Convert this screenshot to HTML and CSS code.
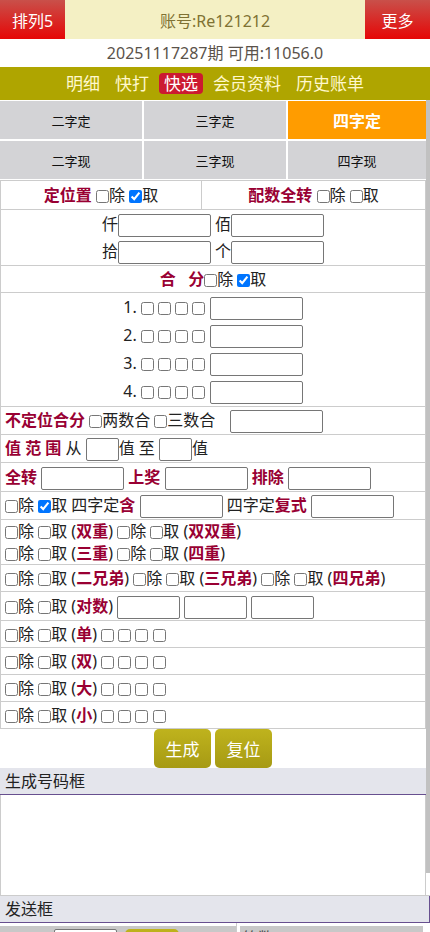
FILE: index.html
```html
<!DOCTYPE html>
<html lang="zh-CN">
<head>
    <meta charset="UTF-8">
    <meta name="viewport" content="width=device-width, initial-scale=1.0">
    <title>快选</title>
    <link rel="stylesheet" href="styles.css">
</head>
<body>
    <div class="top-bar">
        <a class="top-btn">排列5</a>
        <div class="account">账号:Re121212</div>
        <a class="top-btn">更多</a>
    </div>
    <div class="issue">20251117287期 可用:11056.0</div>
    <div class="nav">
        <a>明细</a>
        <a>快打</a>
        <a class="active">快选</a>
        <a>会员资料</a>
        <a>历史账单</a>
    </div>

    <div class="main">
        <div class="tabs">
            <a>二字定</a>
            <a>三字定</a>
            <a class="active">四字定</a>
            <a>二字现</a>
            <a>三字现</a>
            <a>四字现</a>
        </div>

        <div class="form">
            <div class="row split h28">
                <div class="cell"><b class="lbl">定位置</b> <input type="checkbox">除 <input type="checkbox" checked>取</div>
                <div class="cell"><b class="lbl">配数全转</b> <input type="checkbox">除 <input type="checkbox">取</div>
            </div>
            <div class="row multi pos">
                <div class="line">仟<input class="txt"> 佰<input class="txt"></div>
                <div class="line">拾<input class="txt"> 个<input class="txt"></div>
            </div>
            <div class="row center h26">
                <b class="lbl">合&nbsp;&nbsp;&nbsp;分</b><input type="checkbox">除 <input type="checkbox" checked>取
            </div>
            <div class="row multi sums">
                <div class="line">1. <input type="checkbox"> <input type="checkbox"> <input type="checkbox"> <input type="checkbox"> <input class="txt"></div>
                <div class="line">2. <input type="checkbox"> <input type="checkbox"> <input type="checkbox"> <input type="checkbox"> <input class="txt"></div>
                <div class="line">3. <input type="checkbox"> <input type="checkbox"> <input type="checkbox"> <input type="checkbox"> <input class="txt"></div>
                <div class="line">4. <input type="checkbox"> <input type="checkbox"> <input type="checkbox"> <input type="checkbox"> <input class="txt"></div>
            </div>
            <div class="row">
                <b class="lbl">不定位合分</b> <input type="checkbox">两数合 <input type="checkbox">三数合 <input class="txt ml">
            </div>
            <div class="row">
                <b class="lbl">值 范 围</b> 从 <input class="txt xs">值 至 <input class="txt xs">值
            </div>
            <div class="row h28">
                <b class="lbl">全转</b> <input class="txt md"> <b class="lbl">上奖</b> <input class="txt md"> <b class="lbl">排除</b> <input class="txt md">
            </div>
            <div class="row">
                <input type="checkbox">除 <input type="checkbox" checked>取 四字定<b class="lbl">含</b> <input class="txt md"> 四字定<b class="lbl">复式</b> <input class="txt md">
            </div>
            <div class="row multi pairs">
                <div class="line"><input type="checkbox">除 <input type="checkbox">取 (<b class="lbl">双重</b>) <input type="checkbox">除 <input type="checkbox">取 (<b class="lbl">双双重</b>)</div>
                <div class="line"><input type="checkbox">除 <input type="checkbox">取 (<b class="lbl">三重</b>) <input type="checkbox">除 <input type="checkbox">取 (<b class="lbl">四重</b>)</div>
            </div>
            <div class="row h26">
                <input type="checkbox">除 <input type="checkbox">取 (<b class="lbl">二兄弟</b>) <input type="checkbox">除 <input type="checkbox">取 (<b class="lbl">三兄弟</b>) <input type="checkbox">除 <input type="checkbox">取 (<b class="lbl">四兄弟</b>)
            </div>
            <div class="row h28">
                <input type="checkbox">除 <input type="checkbox">取 (<b class="lbl">对数</b>) <input class="txt sm"> <input class="txt sm"> <input class="txt sm">
            </div>
            <div class="row h26">
                <input type="checkbox">除 <input type="checkbox">取 (<b class="lbl">单</b>) <input type="checkbox"> <input type="checkbox"> <input type="checkbox"> <input type="checkbox">
            </div>
            <div class="row h26">
                <input type="checkbox">除 <input type="checkbox">取 (<b class="lbl">双</b>) <input type="checkbox"> <input type="checkbox"> <input type="checkbox"> <input type="checkbox">
            </div>
            <div class="row h26">
                <input type="checkbox">除 <input type="checkbox">取 (<b class="lbl">大</b>) <input type="checkbox"> <input type="checkbox"> <input type="checkbox"> <input type="checkbox">
            </div>
            <div class="row h26">
                <input type="checkbox">除 <input type="checkbox">取 (<b class="lbl">小</b>) <input type="checkbox"> <input type="checkbox"> <input type="checkbox"> <input type="checkbox">
            </div>
        </div>

        <div class="actions">
            <button class="olive-btn">生成</button>
            <button class="olive-btn">复位</button>
        </div>

        <div class="box-title">生成号码框</div>
        <textarea class="box-text"></textarea>
    </div>

    <div class="box-title send">发送框</div>
    <div class="send-row">
        <div class="send-cell">
            <div class="send-bar">
                <input class="txt sm"> <button class="olive-btn small" aria-label="发送"></button>
            </div>
        </div>
        <div class="send-cell last">
            <div class="send-bar count">笔数： 0</div>
        </div>
    </div>
</body>
</html>
```

FILE: styles.css
```css
* {
    box-sizing: border-box;
}
html, body {
    margin: 0;
    height: 100%;
}
body {
    font-family: "Noto Sans", "Noto Sans CJK SC", sans-serif;
    font-size: 16px;
    color: #222;
    background: #fff;
    overflow: hidden;
}
a {
    color: inherit;
    text-decoration: none;
}

/* header */
.top-bar {
    display: flex;
    height: 39px;
}
.top-btn {
    width: 65px;
    display: flex;
    align-items: center;
    justify-content: center;
    color: #fff;
    background: linear-gradient(#c9504a, #e60606);
}
.account {
    flex: 1;
    display: flex;
    align-items: center;
    justify-content: center;
    background: #f4f0c4;
    color: #7f7233;
}
.issue {
    height: 28px;
    line-height: 28px;
    text-align: center;
    color: #5a524a;
}
.nav {
    height: 33px;
    background: #afa500;
    display: flex;
    justify-content: center;
    align-items: center;
    gap: 5px;
    font-size: 17px;
}
.nav a {
    color: #fff8cc;
    padding: 0 5px;
    line-height: 21px;
    border-radius: 4px;
}
.nav a.active {
    background: #cc1a30;
    color: #fff;
}

/* scrolling part, thumb drawn as a strip on the right */
.main {
    height: 796px;
    overflow-y: auto;
    scrollbar-width: none;
    padding: 1px 4px 0 0;
    border-bottom: 1px solid #ccc;
    background: linear-gradient(#c1c1c1, #c1c1c1) right top / 4px 773px no-repeat;
}

.tabs {
    display: grid;
    grid-template-columns: 142px 142px 1fr;
    gap: 2px;
    margin-bottom: 1px;
}
.tabs a {
    height: 38px;
    display: flex;
    align-items: center;
    justify-content: center;
    background: #d3d3d6;
    font-size: 13px;
    color: #111;
}
.tabs a.active {
    background: #ff9c00;
    color: #fff;
    font-weight: bold;
    font-size: 16px;
}

/* form rows (heights include the bottom border) */
.form {
    border: 1px solid #ccc;
    border-bottom: none;
    background: #fff;
}
.row {
    height: 28px;
    line-height: 27px;
    padding-left: 4px;
    border-bottom: 1px solid #ccc;
    white-space: nowrap;
}
.row.h26 {
    height: 27px;
    line-height: 26px;
}
.row.h28 {
    height: 29px;
    line-height: 28px;
}
.row.center {
    text-align: center;
    padding-left: 0;
}
.row.multi {
    height: auto;
    line-height: normal;
}
.row.split {
    display: grid;
    grid-template-columns: 201px 1fr;
    padding-left: 0;
}
.row.split .cell {
    text-align: center;
}
.row.split .cell:first-child {
    border-right: 1px solid #ccc;
}
.pos {
    text-align: center;
    padding: 1px 0 0;
}
.pos .line {
    height: 27px;
    line-height: 27px;
}
.sums {
    text-align: center;
    padding: 0 0 1px;
}
.sums .line {
    height: 28px;
    line-height: 28px;
}
.pairs .line {
    height: 22px;
    line-height: 22px;
}

.lbl {
    color: #990033;
    font-weight: bold;
}

input[type="checkbox"] {
    width: 13px;
    height: 13px;
    margin: 0;
    vertical-align: -2px;
}
.txt {
    width: 93px;
    height: 23px;
    padding: 1px 2px;
    border: 1px solid #767676;
    border-radius: 2px;
    font: inherit;
    vertical-align: middle;
    background: #fff;
}
.txt.md {
    width: 83px;
}
.txt.sm {
    width: 63px;
}
.txt.xs {
    width: 33px;
}
.txt.ml {
    margin-left: 10px;
}

.actions {
    height: 39px;
    text-align: center;
    font-size: 0;
    background: #fff;
}
.olive-btn {
    width: 57px;
    height: 39px;
    margin: 0 2px;
    border: none;
    border-radius: 5px;
    background: linear-gradient(#bfb31d, #a69a14);
    color: #fff;
    font-family: inherit;
    font-size: 17px;
    vertical-align: top;
}

.box-title {
    height: 27px;
    line-height: 26px;
    padding-left: 5px;
    background: #e4e5ec;
    border-bottom: 1px solid #674f8f;
    color: #222;
}
.box-text {
    display: block;
    width: 100%;
    height: 125px;
    margin: 0;
    border: 1px solid #ccc;
    border-top: none;
    resize: none;
}
.box-title.send {
    border-right: 1px solid #674f8f;
}

.send-row {
    display: grid;
    grid-template-columns: 237px 1fr;
}
.send-cell {
    padding-top: 3px;
    border-right: 1px solid #ccc;
}
.send-cell.last {
    border-right: none;
    padding: 3px 7px 0 3px;
}
.send-bar {
    height: 30px;
    padding: 3px 0 0 54px;
    background: #c8c8c8;
    font-size: 0;
}
.send-bar .txt {
    vertical-align: top;
    margin-right: 6px;
}
.olive-btn.small {
    width: 54px;
    height: 26px;
}
.send-bar.count {
    padding: 0 0 0 3px;
    font-size: 15px;
    line-height: 22px;
    color: #444;
}
```
